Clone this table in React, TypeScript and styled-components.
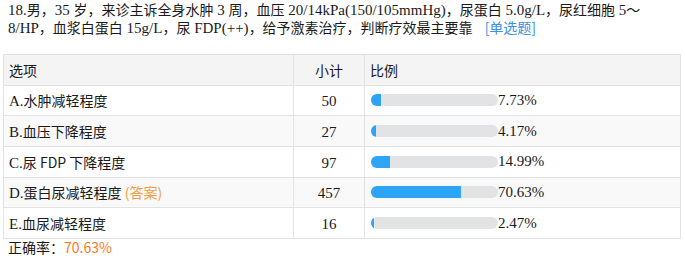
import styled, { createGlobalStyle } from "styled-components";

const QUESTION =
  "18.男，35 岁，来诊主诉全身水肿 3 周，血压 20/14kPa(150/105mmHg)，尿蛋白 5.0g/L，尿红细胞 5～\u200b8/HP，血浆白蛋白 15g/L，尿 FDP(++)，给予激素治疗，判断疗效最主要靠";

const OPTIONS = [
  { label: "A.", text: "水肿减轻程度", count: 50, percent: 7.73 },
  { label: "B.", text: "血压下降程度", count: 27, percent: 4.17 },
  { label: "C.", text: "尿 FDP 下降程度", count: 97, percent: 14.99 },
  { label: "D.", text: "蛋白尿减轻程度", count: 457, percent: 70.63, answer: true },
  { label: "E.", text: "血尿减轻程度", count: 16, percent: 2.47 },
];

const HAN = /([\u3000-\u9fff\uff00-\uffef]+)/;

// Latin runs in the serif face, Chinese runs in the CJK face a size smaller
function Mixed({ text }: { text: string }) {
  return (
    <>
      {text.split(HAN).map((part, i) =>
        HAN.test(part) ? <Han key={i}>{part}</Han> : <Latin key={i}>{part}</Latin>
      )}
    </>
  );
}

function App() {
  return (
    <Page>
      <GlobalStyle />
      <Question>
        <Mixed text={QUESTION} />
        <QuestionType>[单选题]</QuestionType>
      </Question>
      <Table>
        <colgroup>
          <col style={{ width: 290 }} />
          <col style={{ width: 71 }} />
          <col />
        </colgroup>
        <thead>
          <tr>
            <HeadCell>选项</HeadCell>
            <HeadCell $center>小计</HeadCell>
            <HeadCell>比例</HeadCell>
          </tr>
        </thead>
        <tbody>
          {OPTIONS.map((opt) => (
            <Row key={opt.label}>
              <Cell>
                <Latin>{opt.label}</Latin>
                <Han>{opt.text}</Han>
                {opt.answer && <Answer> (答案)</Answer>}
              </Cell>
              <Cell $center>
                <Latin>{opt.count}</Latin>
              </Cell>
              <Cell>
                <BarWrap>
                  <Track>
                    <Fill style={{ width: `${opt.percent}%` }} />
                  </Track>
                  <Latin>{opt.percent.toFixed(2)}%</Latin>
                </BarWrap>
              </Cell>
            </Row>
          ))}
        </tbody>
      </Table>
      <Accuracy>
        正确率：<Rate>70.63%</Rate>
      </Accuracy>
    </Page>
  );
}

const GlobalStyle = createGlobalStyle`
  body {
    margin: 0;
    background: #fff;
    color: #1a1a1a;
    font-family: "Noto Sans CJK SC", sans-serif;
    font-size: 14px;
  }
`;

const Page = styled.div`
  width: 678px;
  padding: 1px 0 0 3px;
`;

const Question = styled.div`
  padding: 0 0 0 5px;
  line-height: 17px;
  margin-bottom: 17px;
`;

const Latin = styled.span`
  font-family: "Liberation Serif", serif;
  font-size: 15px;
`;

const Han = styled.span`
  font-family: "Noto Sans CJK SC", sans-serif;
  font-size: 14px;
`;

const QuestionType = styled.span`
  margin-left: 12px;
  color: #3a8ee6;
  font-size: 14px;
`;

const Table = styled.table`
  width: 678px;
  table-layout: fixed;
  border-collapse: collapse;
  border: 1px solid #e2e2e2;
`;

const HeadCell = styled.th<{ $center?: boolean }>`
  height: 29.67px;
  padding: 0 5px;
  background: #f4f4f4;
  border: 1px solid #e2e2e2;
  font-weight: normal;
  text-align: ${({ $center }) => ($center ? "center" : "left")};
`;

const Row = styled.tr`
  &:nth-child(even) {
    background: #f9f9f9;
  }
`;

const Cell = styled.td<{ $center?: boolean }>`
  height: 29.67px;
  padding: 0 5px;
  border: 1px solid #e2e2e2;
  text-align: ${({ $center }) => ($center ? "center" : "left")};
  white-space: nowrap;
`;

const Answer = styled.span`
  color: #f0a040;
`;

const BarWrap = styled.div`
  display: flex;
  align-items: center;
  padding-left: 1px;
`;

const Track = styled.div`
  width: 127px;
  height: 12px;
  border-radius: 6px;
  background: #e2e3e5;
  overflow: hidden;
`;

const Fill = styled.div`
  height: 100%;
  background: #2ea4f6;
`;

const Accuracy = styled.div`
  padding-left: 5px;
  line-height: 17px;
`;

const Rate = styled.span`
  color: #ff7a1a;
`;

export default App;
